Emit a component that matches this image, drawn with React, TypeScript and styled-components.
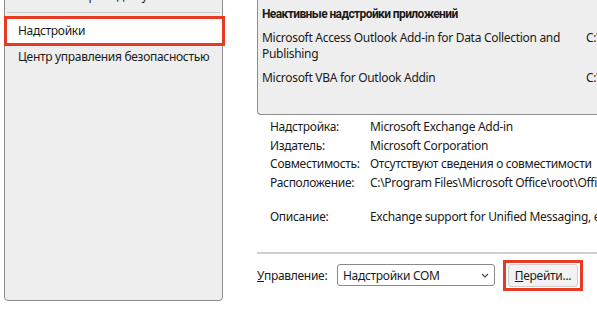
import React from "react";
import styled, { createGlobalStyle } from "styled-components";

const Global = createGlobalStyle`
  html, body { margin: 0; padding: 0; background: #ffffff; }
  body { font-family: "Noto Sans", "Open Sans", Arial, sans-serif; color: #1a1a1a; }
`;

const Page = styled.div`
  width: 597px;
  height: 330px;
  overflow: hidden;
  display: flex;
  align-items: flex-start;
  gap: 34px;
  padding-left: 4px;
  box-sizing: border-box;
  background: #ffffff;
  font-size: 12px;
  letter-spacing: -0.3px;
`;

const Sidebar = styled.nav`
  flex: 0 0 219px;
  height: 321px;
  margin-top: -20px;
  box-sizing: border-box;
  background: #eeeeee;
  border: 1px solid #8e8e8e;
  border-radius: 0 0 4px 4px;
  padding-top: 3px;
  display: flex;
  flex-direction: column;
`;

const NavItem = styled.div<{ $selected?: boolean }>`
  height: 24px;
  line-height: 24px;
  padding-left: ${(p) => (p.$selected ? 11 : 13)}px;
  margin: ${(p) => (p.$selected ? "0 0 2px 2px" : "0 0 2px 0")};
  background: ${(p) => (p.$selected ? "#ffffff" : "transparent")};
  outline: ${(p) => (p.$selected ? "3px solid #e63b22" : "none")};
  white-space: nowrap;
`;

const NavSeparator = styled.div`
  height: 1px;
  background: #c9c9c9;
  margin: 2px 2px 6px 2px;
`;

const Main = styled.main`
  flex: 0 0 420px;
  display: flex;
  flex-direction: column;
`;

const ListBox = styled.div`
  height: 125px;
  margin-top: -10px;
  box-sizing: border-box;
  background: #eeeeee;
  border: 1px solid #8e8e8e;
  border-radius: 0 0 0 4px;
  border-right: none;
  padding: 15px 0 0 4px;
  display: flex;
  flex-direction: column;
`;

const GroupHeader = styled.div`
  font-family: Roboto, "Noto Sans", sans-serif;
  font-weight: 700;
  letter-spacing: -0.6px;
  line-height: 16px;
  padding: 0 0 8px 0;
  white-space: nowrap;
`;

const ListRow = styled.div`
  display: grid;
  grid-template-columns: 324px 1fr;
  line-height: 16px;
  padding: 0 0 8px 0;
`;

const Cell = styled.div<{ $nowrap?: boolean }>`
  white-space: ${(p) => (p.$nowrap ? "nowrap" : "normal")};
  overflow: hidden;
`;

const Details = styled.div`
  display: grid;
  grid-template-columns: 100px 1fr;
  padding: 3px 0 0 13px;
`;

const DetailLabel = styled.div<{ $gap?: number }>`
  line-height: 18.5px;
  white-space: nowrap;
  margin-top: ${(p) => p.$gap ?? 0}px;
`;

const DetailValue = styled.div<{ $gap?: number }>`
  line-height: 18.5px;
  white-space: nowrap;
  margin-top: ${(p) => p.$gap ?? 0}px;
`;

const Divider = styled.div`
  height: 2px;
  background: #d0d0d0;
  margin-top: 25px;
`;

const ManageRow = styled.div`
  display: flex;
  align-items: center;
  margin-top: 6px;
  height: 31px;
`;

const ManageLabel = styled.span`
  width: 80px;
  white-space: nowrap;
`;

const Select = styled.div`
  width: 158px;
  height: 22px;
  box-sizing: border-box;
  background: #ffffff;
  border: 1px solid #8a8a8a;
  border-radius: 3px;
  display: flex;
  align-items: center;
  justify-content: space-between;
  padding: 0 5px 0 5px;
  white-space: nowrap;
`;

const Highlight = styled.div`
  margin-left: 8px;
  border: 3px solid #e63b22;
  padding: 1px 2px;
  display: flex;
`;

const Button = styled.button`
  width: 70px;
  height: 23px;
  box-sizing: border-box;
  background: #f2f2f2;
  border: 1px solid #cfcfcf;
  border-radius: 3px;
  font: inherit;
  letter-spacing: inherit;
  color: #1a1a1a;
  padding: 0;
  white-space: nowrap;
`;

const Accel = styled.span`
  text-decoration: underline;
`;

const Chevron = () => (
  <svg width="8" height="5" viewBox="0 0 8 5">
    <path d="M1 1 L4 4 L7 1" fill="none" stroke="#444" strokeWidth="1.1" />
  </svg>
);

const details = [
  ["Надстройка:", "Microsoft Exchange Add-in"],
  ["Издатель:", "Microsoft Corporation"],
  ["Совместимость:", "Отсутствуют сведения о совместимости"],
  ["Расположение:", "C:\\Program Files\\Microsoft Office\\root\\Office16\\ADDINS\\UmOutlookAddin.dll"],
  ["Описание:", "Exchange support for Unified Messaging, e-mail with voice, and call"],
];

export default function App() {
  return (
    <>
      <Global />
      <Page>
        <Sidebar>
          <NavItem>Панель быстрого доступа</NavItem>
          <NavSeparator />
          <NavItem $selected>Надстройки</NavItem>
          <NavItem>Центр управления безопасностью</NavItem>
        </Sidebar>
        <Main>
          <ListBox>
            <GroupHeader>Неактивные надстройки приложений</GroupHeader>
            <ListRow>
              <Cell>Microsoft Access Outlook Add-in for Data Collection and Publishing</Cell>
              <Cell $nowrap>C:\Program Files\Microsoft Office\root\Office16\ADDINS\ACCOLK.DLL</Cell>
            </ListRow>
            <ListRow>
              <Cell>Microsoft VBA for Outlook Addin</Cell>
              <Cell $nowrap>C:\Program Files\Microsoft Office\root\Office16\ADDINS\OUTLVBA.DLL</Cell>
            </ListRow>
          </ListBox>
          <Details>
            {details.map(([label, value], i) => (
              <React.Fragment key={label}>
                <DetailLabel $gap={i === 4 ? 16 : 0}>{label}</DetailLabel>
                <DetailValue $gap={i === 4 ? 16 : 0}>{value}</DetailValue>
              </React.Fragment>
            ))}
          </Details>
          <Divider />
          <ManageRow>
            <ManageLabel>
              <Accel>У</Accel>правление:
            </ManageLabel>
            <Select>
              <span>Надстройки COM</span>
              <Chevron />
            </Select>
            <Highlight>
              <Button>
                <Accel>П</Accel>ерейти...
              </Button>
            </Highlight>
          </ManageRow>
        </Main>
      </Page>
    </>
  );
}
